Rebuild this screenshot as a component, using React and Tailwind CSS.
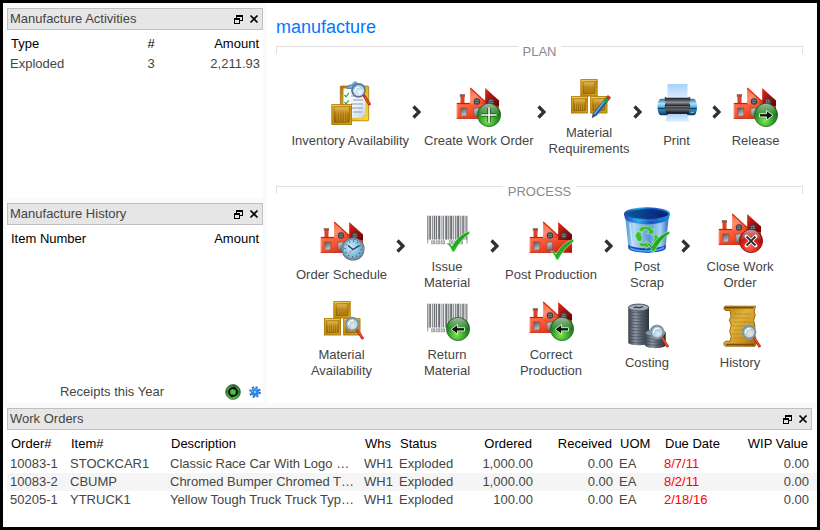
const HOVER = "cursor-pointer";

function Gradient({ id, stops, horizontal, diagonal }) {
  return (
    <linearGradient id={id} x1="0" y1="0" x2={horizontal || diagonal ? 1 : 0} y2={horizontal ? 0 : 1}>
      {stops.map(([offset, color]) => (
        <stop key={offset} offset={offset} stopColor={color} />
      ))}
    </linearGradient>
  );
}

function IconDefs() {
  return (
    <svg width="0" height="0" className="absolute" aria-hidden="true">
      <defs>
        <Gradient id="wall" diagonal stops={[[0, "#ff7a55"], [0.45, "#f8532e"], [0.75, "#d83018"], [1, "#9a1008"]]} />
        <Gradient id="roofDark" diagonal stops={[[0, "#d8301c"], [0.5, "#a80f0a"], [1, "#5e0404"]]} />
        <Gradient id="roofLight" diagonal stops={[[0, "#ff5a30"], [0.4, "#ff9070"], [1, "#e03a1c"]]} />
        <Gradient id="pane" diagonal stops={[[0, "#4c5660"], [0.5, "#b4bcc4"], [1, "#59626c"]]} />
        <Gradient id="crate" diagonal stops={[[0, "#e3b62c"], [0.5, "#c48c0a"], [1, "#dca814"]]} />
        <Gradient id="crateIn" stops={[[0, "#e8c258"], [0.45, "#b07c12"], [1, "#966406"]]} />
        <Gradient id="board" diagonal stops={[[0, "#a87412"], [0.5, "#e8b418"], [1, "#ffd820"]]} />
        <Gradient id="sheet" diagonal stops={[[0, "#ffffff"], [0.6, "#eef3fb"], [1, "#b9d2f2"]]} />
        <Gradient id="paper" stops={[[0, "#a9d0fa"], [1, "#e2f1ff"]]} />
        <Gradient id="printer" stops={[[0, "#2a6a9c"], [0.3, "#a8e2fa"], [0.6, "#3d9bd4"], [1, "#0b3358"]]} />
        <Gradient id="roller" stops={[[0, "#15181c"], [0.3, "#8a9096"], [0.5, "#24282c"], [0.75, "#5c6268"], [1, "#0c0e10"]]} />
        <Gradient id="bin" horizontal stops={[[0, "#3f8fd6"], [0.2, "#b4dcf8"], [0.55, "#5a96d8"], [0.8, "#a9d2f4"], [1, "#2b6ab8"]]} />
        <Gradient id="rim" horizontal stops={[[0, "#2a45b8"], [0.3, "#28a8e8"], [0.6, "#1a50c0"], [1, "#1690d8"]]} />
        <Gradient id="binIn" horizontal stops={[[0, "#0a5c94"], [0.5, "#083a8c"], [1, "#0a1c6c"]]} />
        <Gradient id="coin" horizontal stops={[[0, "#39424e"], [0.35, "#8f9aa6"], [0.6, "#5b6672"], [1, "#262d38"]]} />
        <Gradient id="scroll" diagonal stops={[[0, "#b87c0c"], [0.4, "#e0b23c"], [0.7, "#cf9620"], [1, "#9a6206"]]} />
        <Gradient id="tick" diagonal stops={[[0, "#0c6e10"], [0.5, "#22a820"], [1, "#4cf040"]]} />
        <Gradient id="gloss" stops={[[0, "#ffffff"], [1, "#ffffff00"]]} />
        <radialGradient id="green" cx="0.45" cy="0.75" r="0.75">
          <stop offset="0" stopColor="#7ee850" />
          <stop offset="0.5" stopColor="#2f9a2a" />
          <stop offset="1" stopColor="#08500c" />
        </radialGradient>
        <radialGradient id="red" cx="0.45" cy="0.75" r="0.75">
          <stop offset="0" stopColor="#ff6850" />
          <stop offset="0.5" stopColor="#d01c14" />
          <stop offset="1" stopColor="#780404" />
        </radialGradient>
        <radialGradient id="dial" cx="0.4" cy="0.4" r="0.7">
          <stop offset="0" stopColor="#cdeaf8" />
          <stop offset="1" stopColor="#4f9ccc" />
        </radialGradient>
        <radialGradient id="lens" cx="0.6" cy="0.65" r="0.7">
          <stop offset="0" stopColor="#f4fbff" />
          <stop offset="0.6" stopColor="#a9d4f0" />
          <stop offset="1" stopColor="#6a9cc4" />
        </radialGradient>
      </defs>
    </svg>
  );
}

function Factory() {
  return (
    <g>
      <path d="M5.500 24V15.500h4V24z" fill="#e2401e" />
      <path d="M4.800 14.200h5.200v2.600H4.800z" fill="#8e5a50" />
      <path d="M1.800 23.500H15V20h29v18.800H1.800z" fill="url(#wall)" />
      <path d="M15.200 8 30 21.500V24H15.200z" fill="url(#roofLight)" />
      <path d="M15.200 8 30 21.500" stroke="#d22a12" strokeWidth="1.200" />
      <path d="M30.200 8 44 20.500V26H30.200z" fill="url(#roofDark)" />
      <path d="M1.800 23.500H15" stroke="#b82410" strokeWidth="1.200" />
      <path d="M2.200 24.500V38" stroke="#ff9a80" strokeWidth="0.800" />
      {[22, 35.8].map((x) => (
        <g key={x}>
          <circle cx={x} cy="21.500" r="3.200" fill="#3c4148" />
          <circle cx={x} cy="21.500" r="2" fill="#8a9299" />
          <path d={`M${x - 2} 21.500h4M${x} 19.500v4`} stroke="#3c4148" strokeWidth="0.700" />
        </g>
      ))}
      <path d="M5.800 28h6v8.200h-6zM18.800 28h6v8.200h-6z" fill="url(#pane)" stroke="#b03822" strokeWidth="0.600" />
      <path d="M1.800 38.400H30" stroke="#c23018" strokeWidth="0.900" />
    </g>
  );
}

function Badge({ kind }) {
  const arrow = "M27.500 33.700h7v-3.200l6.500 4.800-6.500 4.800v-3.200h-7z";
  return (
    <g>
      <circle cx="34" cy="35" r="11.600" fill={kind === "close" ? "url(#red)" : "url(#green)"} stroke={kind === "close" ? "#8c1410" : "#2a6a28"} strokeWidth="0.800" />
      <path d="M23.800 34a10.200 10.200 0 0 1 20.400 0c-6 3-14-2-20.400 0z" fill="url(#gloss)" opacity="0.600" />
      {kind === "add" && (
        <g>
          <path d="M34 28v14M27 35h14" stroke="#1c3a1c" strokeWidth="3.200" />
          <path d="M34 27.500v15M26.500 35h15" stroke="#fff" strokeWidth="1.600" />
        </g>
      )}
      {kind === "next" && <path d={arrow} fill="#0c140c" stroke="#dff5da" strokeWidth="0.900" />}
      {kind === "back" && <path d={arrow} transform="translate(68 0) scale(-1 1)" fill="#0c140c" stroke="#dff5da" strokeWidth="0.900" />}
      {kind === "close" && (
        <g>
          <path d="m29.500 30.500 9 9m0-9-9 9" stroke="#fff" strokeWidth="3.800" strokeLinecap="round" />
          <path d="m29.500 30.500 9 9m0-9-9 9" stroke="#2c2c2c" strokeWidth="1.800" />
        </g>
      )}
    </g>
  );
}

function Clock() {
  return (
    <g>
      <circle cx="34" cy="35" r="10.600" fill="url(#dial)" stroke="#5b6874" strokeWidth="2" />
      <circle cx="34" cy="35" r="10.400" fill="none" stroke="#b8c6d2" strokeWidth="0.600" />
      <circle cx="34" cy="35" r="7.800" fill="none" stroke="#24506e" strokeWidth="1.400" strokeDasharray="0.800 3.280" />
      <path d="m29 31.500 5 4 6.500-4" fill="none" stroke="#173a54" strokeWidth="1.300" />
      <path d="m34 35.500-4 4" stroke="#d84a30" strokeWidth="0.600" />
    </g>
  );
}

function Tick() {
  return (
    <path
      d="M23.500 37.200c2.400-.6 4.200.6 5.400 3C33 33.500 38.500 27.500 46.500 25.200l.2 2.200C40 32 35.300 38 31.300 45.800h-2.100c-1-3.800-2.900-6.800-5.700-8.600z"
      fill="url(#tick)"
      stroke="#eafbe8"
      strokeWidth="0.500"
    />
  );
}

function Magnifier({ x = 34, y = 30, r = 6.500 }) {
  return (
    <g>
      <path d={`M${x + 4.500} ${y + 5}L${x + 11} ${y + 15}`} stroke="#b82c18" strokeWidth="2.800" />
      <path d={`M${x + 5.500} ${y + 6}L${x + 10.500} ${y + 14}`} stroke="#f4694c" strokeWidth="1" />
      <circle cx={x} cy={y} r={r} fill="url(#lens)" fillOpacity="0.850" stroke="#6c7c8a" strokeWidth="1.600" />
      <circle cx={x} cy={y} r={r + 0.500} fill="none" stroke="#b7c6d2" strokeWidth="0.500" />
      <path d={`M${x - 3.500} ${y + 1}a4 4 0 0 1 5-4.500`} fill="none" stroke="#fff" strokeWidth="1.300" />
    </g>
  );
}

function Crate({ x, y, size = 17 }) {
  const slats = [0.3, 0.42, 0.54, 0.66, 0.78];
  return (
    <g>
      <rect x={x} y={y} width={size} height={size} fill="url(#crate)" />
      <rect x={x + 0.4} y={y + 0.4} width={size - 0.8} height={size - 0.8} fill="none" stroke="#a8780a" strokeWidth="0.800" />
      <rect x={x + 2.600} y={y + 2.600} width={size - 5.200} height={size - 5.200} fill="url(#crateIn)" stroke="#8a5c08" strokeWidth="0.500" />
      {slats.map((s) => (
        <path key={s} d={`M${x + size * s - 0.600} ${y + 3}v${size - 6}`} stroke="#d9a838" strokeWidth="0.600" />
      ))}
      <path d={`M${x + 1} ${y + 1.300}h${size - 2}`} stroke="#f7e08a" strokeWidth="0.700" />
    </g>
  );
}

function Crates() {
  return (
    <g>
      <Crate x={15.5} y={7.3} />
      <Crate x={6} y={24.3} />
      <Crate x={25.3} y={24.3} />
    </g>
  );
}

function Barcode() {
  const bars = [
    [4.3, 1], [6.3, 1.6], [9, 0.7], [10.8, 1.4], [13, 1], [15.2, 2], [18.6, 0.7], [20.2, 0.8], [22.3, 2],
    [25.3, 1], [27.2, 2], [30.2, 0.7], [32.2, 1.1], [34.2, 2], [37.4, 0.8], [39.3, 1.5], [41.7, 0.7], [43.3, 1],
  ];
  const digits = [8, 10.4, 12.8, 15.2, 17.6, 20, 26, 28.4, 30.8, 33.2, 35.6, 38];
  return (
    <g>
      <path d="M4 9.700h41V34H4z" fill="#ececec" />
      {bars.map(([x, w]) => (
        <path key={x} d={`M${x} 9.700h${w}V33.500h${-w}z`} fill="#6c6f73" />
      ))}
      <path d="M4.800 33v4.500M44 33v4.500" stroke="#8a8c90" strokeWidth="0.900" />
      {digits.map((x, i) => (
        <path key={x} d={i % 2 ? `M${x} 34.800h1.500v3h-1.500z` : `M${x} 34.800h1.500l-1 1.500 1 1.500h-1.500`} fill="none" stroke="#6d7074" strokeWidth="0.700" />
      ))}
    </g>
  );
}

const drawings = {
  inventory: (
    <g>
      <rect x="14.300" y="6" width="28.400" height="34.800" rx="1" fill="url(#board)" stroke="#94690c" strokeWidth="0.700" />
      <path d="M17.500 8.500h22V34l-4 4h-18z" fill="url(#sheet)" />
      <path d="M25 16h9M27 20h10M25 24h12M26 28h11M27 32h9" stroke="#8e97a3" strokeWidth="1" />
      <path d="m18.500 15 1.500 1.800 2.800-3.600m-4.300 9 1.500 1.800 2.800-3.600" fill="none" stroke="#20b42c" strokeWidth="1.200" />
      <path d="m21 8.500 1.500-3 4-1c.5-3.500 5-3.500 5.500 0l4 1 1.500 3z" fill="#6fb0e0" stroke="#3478b4" strokeWidth="0.700" />
      <path d="m37 14 7 11" stroke="#b82c18" strokeWidth="3" />
      <path d="m38.500 16.500 5 7.500" stroke="#f4694c" strokeWidth="1" />
      <circle cx="32.500" cy="10.300" r="6.600" fill="url(#lens)" fillOpacity="0.900" stroke="#5a7488" strokeWidth="1.600" />
      <path d="M29 12a4 4 0 0 1 4.500-5" fill="none" stroke="#fff" strokeWidth="1.300" />
      <Crate x={5.5} y={24.3} size={20.5} />
    </g>
  ),
  create: <g><Factory /><Badge kind="add" /></g>,
  requirements: (
    <g>
      <Crates />
      <path d="m43 26-13.500 17" stroke="#1c5ca8" strokeWidth="4" />
      <path d="m42.200 25.800-13 16.500" stroke="#6db8f4" strokeWidth="1.300" />
      <path d="m27.700 41.200 3.200 2.500-4 2.600z" fill="#344a68" />
      <path d="m44.500 24.200-2.200 2.700" stroke="#e02820" strokeWidth="4" />
      <path d="m42.300 26.900-2.600 3.300" stroke="#22a03c" strokeWidth="4" />
    </g>
  ),
  print: (
    <g>
      <path d="M14.500 4h20v16h-20z" fill="url(#paper)" />
      <path d="M8 18.700h32.500c2 0 3.500 4 3.500 8.500s-1.500 8-3.500 8H8c-2 0-3.500-3.500-3.500-8s1.500-8.500 3.500-8.500z" fill="url(#printer)" />
      <path d="M5 28.500h38.700" stroke="#0d3d6a" strokeWidth="1.500" />
      <path d="M13.200 17.700h22.600l1.400 8-1.400 7.800H13.200l-1.400-7.800z" fill="url(#roller)" />
      <path d="M13 26.500h23.500" stroke="#92989e" strokeWidth="0.600" />
      <path d="M12.500 17v4m24-4v4" stroke="#3a4148" strokeWidth="1.400" />
      <path d="M15 34h19l2.500 7.700H11.800z" fill="url(#paper)" />
      <path d="M37.500 32.300h3.500" stroke="#62e0ff" strokeWidth="1" />
    </g>
  ),
  release: <g><Factory /><Badge kind="next" /></g>,
  schedule: <g transform="translate(1 0)"><Factory /><Clock /></g>,
  issue: <g><Barcode /><Tick /></g>,
  post: <g><g transform="translate(1 0)"><Factory /></g><Tick /></g>,
  scrap: (
    <g>
      <path d="M2 8h44l-3.500 34.500C40 48 8 48 5.500 42.500z" fill="url(#bin)" />
      <path d="M5 38.500c5 5 33 5 38 0l-.5 4C40 48 8 48 5.500 42.500z" fill="#2c3cc0" />
      <path d="M7 42c7 4 27 4 34-.5" fill="none" stroke="#35b8f0" strokeWidth="1.500" />
      <path d="M1.200 7.500C1.200 12 12 14.800 24 14.800S46.800 12 46.800 7.500l-.6 4.500C44 16 35 18.200 24 18.200S4 16 1.800 12z" fill="url(#rim)" />
      <ellipse cx="24" cy="8" rx="22.200" ry="5.800" fill="url(#binIn)" stroke="url(#rim)" strokeWidth="1.800" />
      <path d="M7 17.500 9.500 40" stroke="#e6f6ff" strokeWidth="1.500" opacity="0.700" />
      <g fill="#3cc030" stroke="#d2f4cc" strokeWidth="0.500">
        <path d="m18.500 20.500 8.500-.3 2.700 3.600 2-1-1.800 6-6-1.500 2-1.300-1.700-2.300h-3.200l-2 2.500-3.500-2.200z" />
        <path d="m13.300 25.500 6.200 1.300-1.700 1.200 1.700 3.700-1.300 3.600-3.200.4-3-6 1.500-2.500z" />
        <path d="m15.500 37 7.500-.3v-2.200l4.500 4.400-4.500 4v-2.100l-5.500-.2z" />
        <path d="m30.500 29.500 3.400-1.200 1.800 4-3 5.700-3.200-1.800 2-3.700z" />
      </g>
      <Tick />
    </g>
  ),
  close: <g transform="translate(1 0)"><Factory /><Badge kind="close" /></g>,
  availability: <g><Crates /><Magnifier /></g>,
  return: <g><Barcode /><g transform="translate(1 0)"><Badge kind="back" /></g></g>,
  correct: <g transform="translate(1 0)"><Factory /><Badge kind="back" /></g>,
  costing: (
    <g>
      <path d="M5.300 5.500V41c2 3 18.700 3 20.700 0V5.500z" fill="url(#coin)" />
      {[9, 12, 15, 18, 21, 24, 27, 30, 33, 36, 39].map((y) => (
        <path key={y} d={`M5.300 ${y}c2 2.400 18.700 2.400 20.700 0`} fill="none" stroke="#424b57" strokeWidth="0.700" />
      ))}
      <ellipse cx="15.600" cy="5.500" rx="10.200" ry="3.400" fill="#a3adb7" stroke="#4a535e" strokeWidth="1" />
      <path d="M11 6c2-2.500 4 1.500 9-1.500" fill="none" stroke="#353d48" strokeWidth="1.300" />
      <path d="M22 31v12.500c2 3.500 18.500 3.500 20.700 0V31z" fill="url(#coin)" />
      {[35, 38, 41].map((y) => (
        <path key={y} d={`M22 ${y}c2 2.800 18.700 2.800 20.700 0`} fill="none" stroke="#424b57" strokeWidth="0.700" />
      ))}
      <ellipse cx="32.400" cy="31" rx="10.200" ry="3.400" fill="#8b95a0" stroke="#4a535e" strokeWidth="0.800" />
      <Magnifier />
    </g>
  ),
  history: (
    <g>
      <path d="M9 4.200h30.500l-1.300 5 1 4-1.500 5 1.300 6-1 6 2.500 9.500-1.500 4.500H9.500c-2.500-1-2-4.500.5-5h4l1.200-5-1.500-5 1.500-6-1.800-5 1.600-4-1-5.700H9.500c-2-1-2-3.500-.5-4.300z" fill="url(#scroll)" stroke="#8e5e0a" strokeWidth="0.900" />
      <path d="M9 5.800h28.500M10 42.500h28" stroke="#7c4c04" strokeWidth="1.400" />
      <path d="M18 12h17M17 16h17M18 20h17M17 24h12M18 28h8M17 32h9M18 36h14" stroke="#a87a24" strokeWidth="0.700" strokeDasharray="2.500 0.800" />
      <Magnifier x={33} />
    </g>
  ),
};

function Action({ icon, label }) {
  return (
    <button type="button" className={`flex min-w-16 flex-col items-center gap-[5px] whitespace-pre-line text-center leading-4 ${HOVER}`}>
      <svg viewBox="0 0 48 48" className="size-12" aria-hidden="true">
        {drawings[icon]}
      </svg>
      <span>{label}</span>
    </button>
  );
}

function Arrow() {
  return (
    <svg viewBox="0 0 9 14" className="mb-[5px] h-3.5 w-[9px] shrink-0 justify-self-center" aria-hidden="true">
      <path d="m1.500 1.500 5.500 5.500-5.500 5.500" fill="none" stroke="#303030" strokeWidth="3.200" />
    </svg>
  );
}

function Legend({ children }) {
  return (
    <div className="flex items-start">
      <div className="mt-[5px] h-2 flex-1 border-t border-l border-[#e0e0e0]" />
      <h2 className="px-[5px] leading-[22px] text-[#8a8a8a]">{children}</h2>
      <div className="mt-[5px] h-2 flex-1 border-t border-r border-[#e0e0e0]" />
    </div>
  );
}

function TitleBar({ children }) {
  return (
    <header className="flex h-[22px] items-center border border-[#c0c0c0] bg-[#e6e6e6] pr-[3px] pl-0.5">
      <h2 className="flex-1 leading-5">{children}</h2>
      <div className="flex gap-[6px]">
        <button type="button" aria-label="Float panel" className={HOVER}>
          <svg viewBox="0 0 10 10" className="size-2.5" shapeRendering="crispEdges" aria-hidden="true">
            <path d="M3 1h7v6H7v3H1V4h2zM4 3v1h3v2h2V3zM2 6v3h4V6z" fill="#000" fillRule="evenodd" />
          </svg>
        </button>
        <button type="button" aria-label="Close panel" className={HOVER}>
          <svg viewBox="0 0 10 10" className="size-2.5" aria-hidden="true">
            <path d="m1.500 1.500 7 7m0-7-7 7" stroke="#000" strokeWidth="1.700" />
          </svg>
        </button>
      </div>
    </header>
  );
}

const orders = [
  ["10083-1", "STOCKCAR1", "Classic Race Car With Logo …", "WH1", "Exploded", "1,000.00", "0.00", "EA", "8/7/11", "0.00"],
  ["10083-2", "CBUMP", "Chromed Bumper Chromed T…", "WH1", "Exploded", "1,000.00", "0.00", "EA", "8/2/11", "0.00"],
  ["50205-1", "YTRUCK1", "Yellow Tough Truck Truck Typ…", "WH1", "Exploded", "100.00", "0.00", "EA", "2/18/16", "0.00"],
];

const columns = [
  { name: "Order#", head: "w-[60px] px-1 text-left", cell: "px-[3px]" },
  { name: "Item#", head: "w-[100px] px-1 text-left", cell: "px-[3px]" },
  { name: "Description", head: "px-1 text-left", cell: "truncate px-[3px]" },
  { name: "Whs", head: "w-9 pl-1 text-left", cell: "pl-[3px]" },
  { name: "Status", head: "w-20 pl-[3px] text-left", cell: "pl-0.5" },
  { name: "Ordered", head: "w-[59px] pr-1 text-right", cell: "pr-[3px] text-right" },
  { name: "Received", head: "w-20 pr-1 text-right", cell: "pr-[3px] text-right" },
  { name: "UOM", head: "w-[45px] pl-1 text-left", cell: "pl-[3px]" },
  { name: "Due Date", head: "w-[70px] pl-1 text-left", cell: "pl-[3px] text-[#ff0000]" },
  { name: "WIP Value", head: "w-[86px] pr-[9px] text-right", cell: "pr-2 text-right" },
];

export default function App() {
  return (
    <div className="flex min-h-screen flex-col border-[3px] border-black bg-[#fafafa] font-['Liberation_Sans',Arial,sans-serif] text-[13px] leading-[18px] text-[#454545]">
      <IconDefs />
      <div className="flex gap-1 pl-1">
        <aside className="flex w-64 shrink-0 flex-col gap-[5px] pt-[5px]">
          <section className="min-h-[190px] bg-white">
            <TitleBar>Manufacture Activities</TitleBar>
            <table className="mt-[3px] w-full">
              <thead className="text-black">
                <tr className="h-[22px]">
                  <th className="pl-1 text-left font-normal">Type</th>
                  <th className="w-10 text-center font-normal">#</th>
                  <th className="w-[92px] pr-1 text-right font-normal">Amount</th>
                </tr>
              </thead>
              <tbody>
                <tr>
                  <td className="pl-[3px]">Exploded</td>
                  <td className="text-center">3</td>
                  <td className="pr-[3px] text-right">2,211.93</td>
                </tr>
              </tbody>
            </table>
          </section>
          <section className="flex flex-1 flex-col bg-white">
            <TitleBar>Manufacture History</TitleBar>
            <table className="mt-[3px] w-full">
              <thead className="text-black">
                <tr className="h-[22px]">
                  <th className="pl-1 text-left font-normal">Item Number</th>
                  <th className="pr-1 text-right font-normal">Amount</th>
                </tr>
              </thead>
            </table>
            <footer className="mt-auto flex h-[22px] items-center gap-2 pr-0.5">
              <span className="flex-1 text-center">Receipts this Year</span>
              <button type="button" aria-label="Refresh" className={HOVER}>
                <svg viewBox="0 0 16 16" className="size-4" aria-hidden="true">
                  <circle cx="8" cy="8" r="7.400" fill="url(#green)" stroke="#4a7e48" strokeWidth="0.900" />
                  <path d="M1.800 6.800a6.400 6.400 0 0 1 12.400 0c-4-2.600-8.400-2.600-12.400 0z" fill="#ffffff" opacity="0.350" />
                  <circle cx="8" cy="8" r="3.900" fill="#55b848" stroke="#0c180c" strokeWidth="2" />
                  <path d="m8.500 2 3 2-3 2zM7.500 10l-3 2 3 2z" fill="#0c180c" />
                </svg>
              </button>
              <button type="button" aria-label="Options" className={HOVER}>
                <svg viewBox="0 0 12 12" className="size-3" aria-hidden="true">
                  <circle cx="6" cy="6" r="4.800" fill="none" stroke="#2a7ad8" strokeWidth="2.200" strokeDasharray="2.100 1.670" />
                  <circle cx="6" cy="6" r="4.200" fill="#2f86e4" />
                  <path d="M3 6a3 3 0 0 1 5-2.300" fill="none" stroke="#6cb4f8" strokeWidth="1" />
                  <circle cx="6" cy="6" r="0.900" fill="#d4ebff" />
                </svg>
              </button>
            </footer>
          </section>
        </aside>

        <main className="min-w-0 flex-1 bg-white pt-2.5 pr-3.5 pb-6 pl-[9px]">
          <h1 className="text-lg leading-7 text-[#0078ff]">manufacture</h1>
          <Legend>PLAN</Legend>
          <div className="mt-[9px] flex items-center justify-center gap-[3px]">
            <Action icon="inventory" label="Inventory Availability" />
            <Arrow />
            <Action icon="create" label="Create Work Order" />
            <Arrow />
            <Action icon="requirements" label={"Material\nRequirements"} />
            <Arrow />
            <Action icon="print" label="Print" />
            <Arrow />
            <Action icon="release" label="Release" />
          </div>
          <div className="mt-6">
            <Legend>PROCESS</Legend>
          </div>
          <div className="mt-[3px] grid grid-cols-[103px_14px_80px_14px_100px_14px_64px_12px_98px] items-center justify-center gap-y-[3px]">
            <Action icon="schedule" label="Order Schedule" />
            <Arrow />
            <Action icon="issue" label={"Issue\nMaterial"} />
            <Arrow />
            <Action icon="post" label="Post Production" />
            <Arrow />
            <Action icon="scrap" label={"Post\nScrap"} />
            <Arrow />
            <Action icon="close" label={"Close Work\nOrder"} />
            <Action icon="availability" label={"Material\nAvailability"} />
            <span />
            <Action icon="return" label={"Return\nMaterial"} />
            <span />
            <Action icon="correct" label={"Correct\nProduction"} />
            <span />
            <Action icon="costing" label="Costing" />
            <span />
            <Action icon="history" label="History" />
          </div>
        </main>
      </div>

      <section className="mt-[5px] flex-1 bg-white pl-1">
        <div className="pr-[5px]">
          <TitleBar>Work Orders</TitleBar>
        </div>
        <table className="mt-[3px] w-full table-fixed">
          <thead className="text-black">
            <tr className="h-[22px]">
              {columns.map((c) => (
                <th key={c.name} className={`font-normal whitespace-nowrap ${c.head}`}>{c.name}</th>
              ))}
            </tr>
          </thead>
          <tbody>
            {orders.map((row) => (
              <tr key={row[0]} className="even:bg-[#f5f5f5]">
                {row.map((value, i) => (
                  <td key={columns[i].name} className={`whitespace-nowrap ${columns[i].cell}`}>{value}</td>
                ))}
              </tr>
            ))}
          </tbody>
        </table>
      </section>
    </div>
  );
}
